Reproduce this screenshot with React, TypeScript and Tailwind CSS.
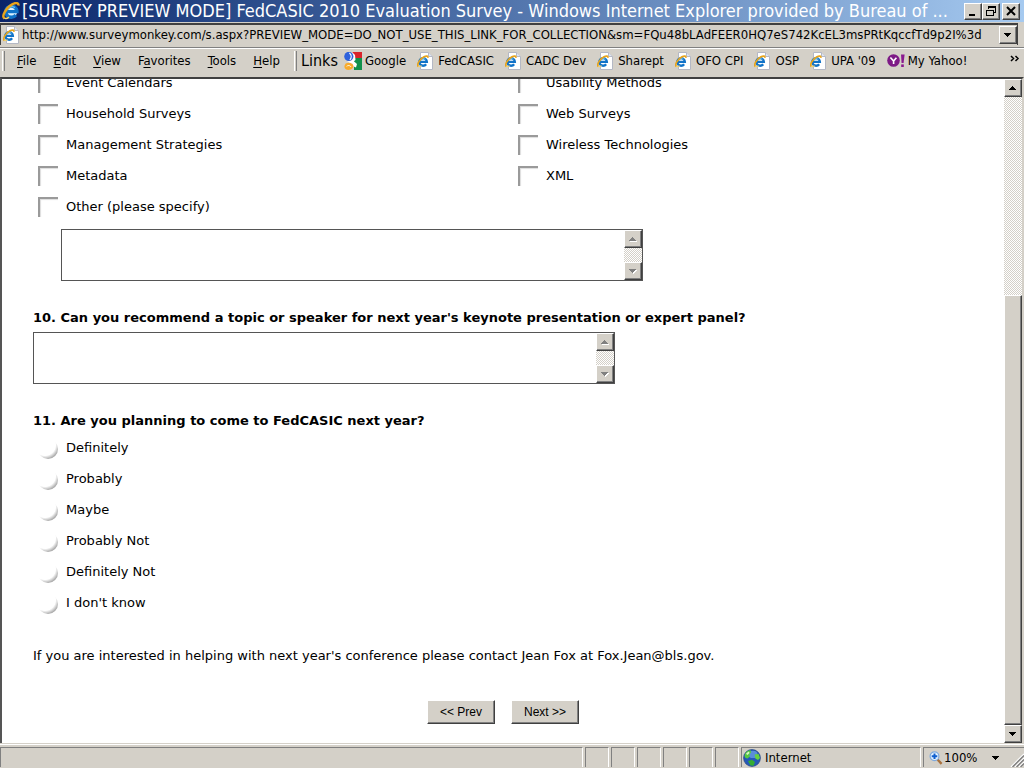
import { useState } from 'react';
import type { ReactNode } from 'react';

const TOPIC_ROWS = [
  ['Event Calendars', 'Usability Methods'],
  ['Household Surveys', 'Web Surveys'],
  ['Management Strategies', 'Wireless Technologies'],
  ['Metadata', 'XML'],
];

const ATTEND_OPTIONS = ['Definitely', 'Probably', 'Maybe', 'Probably Not', 'Definitely Not', "I don't know"];

const MENUS = [
  ['', 'F', 'ile'],
  ['', 'E', 'dit'],
  ['', 'V', 'iew'],
  ['F', 'a', 'vorites'],
  ['', 'T', 'ools'],
  ['', 'H', 'elp'],
];

const LINKS = ['FedCASIC', 'CADC Dev', 'Sharept', 'OFO CPI', 'OSP', "UPA '09"];

const URL_TEXT =
  'http://www.surveymonkey.com/s.aspx?PREVIEW_MODE=DO_NOT_USE_THIS_LINK_FOR_COLLECTION&sm=FQu48bLAdFEER0HQ7eS742KcEL3msPRtKqccfTd9p2I%3d';

const UI_FONT = "font-['DejaVu_Sans_Condensed','DejaVu_Sans',sans-serif] [font-stretch:condensed]";
const RAISED =
  'border border-t-white border-l-white border-r-[#404040] border-b-[#404040] bg-[#d4d0c8] shadow-[inset_-1px_-1px_0_#808080]';
const DITHER = 'bg-[repeating-conic-gradient(#d4d0c8_0_25%,#ffffff_0_50%)] bg-[length:2px_2px]';
const STATUS_CELL = 'h-full border-t border-l border-r border-t-[#808080] border-l-[#808080] border-r-white';

function ExplorerGlyph() {
  return (
    <g fill="none">
      <path d="M4.2 8.6 H13.3 A5 5 0 1 0 12.3 11.6" stroke="#1173c8" strokeWidth="3" />
      <path d="M5 6.5 A4.4 4.4 0 0 1 11.5 5" stroke="#63c0f5" strokeWidth="1.2" />
      <path d="M2.2 14.6 C-0.8 12.6 4 4.6 9.4 1.9 C12.3 0.4 15 0.6 14.5 3.2" stroke="#e9a51b" strokeWidth="2.2" />
      <path d="M2.2 14.2 C3.2 15.2 5 14.4 6.2 13.5" stroke="#f7d46a" strokeWidth="1.4" />
    </g>
  );
}

function ExplorerIcon() {
  return (
    <svg aria-hidden className="size-[18px] shrink-0" viewBox="0 0 16 16">
      <circle cx="8.5" cy="8.5" fill="#d9f1ff" r="5" />
      <ExplorerGlyph />
    </svg>
  );
}

function PageIcon() {
  return (
    <svg aria-hidden className="h-[18px] w-4 shrink-0" viewBox="0 0 16 18">
      <path d="M3.5 0.5 H11.5 L15.5 4.5 V17.5 H3.5 Z" fill="#ffffff" stroke="#b4b8c4" />
      <path d="M11.5 0.5 V4.5 H15.5" fill="#dfe4ee" stroke="#b4b8c4" />
      <g transform="translate(-0.2 3.4) scale(.76)">
        <ExplorerGlyph />
      </g>
    </svg>
  );
}

function GoogleIcon() {
  return (
    <svg aria-hidden className="size-[18px] shrink-0" viewBox="0 0 18 18">
      <path d="M8 0 H18 V6 H9 Z" fill="#d9232b" />
      <path d="M10 6 H18 V18 H10 Z" fill="#11914b" />
      <path d="M8 0 L11 3 L11.5 8 L9 10 L7 8 Z" fill="#fff" />
      <ellipse cx="4.8" cy="4.4" fill="#2f62dc" rx="4.6" ry="4.6" />
      <path d="M5.4 1 C8 3 7.6 6 5.8 8" fill="none" stroke="#fff" strokeWidth="1.1" />
      <path d="M1.6 11.6 C5 9.8 8.5 11 9.6 13.6 C9.8 16 7 18 4.6 18 C2 18 0.2 16.4 0.4 14 Z" fill="#f9ab2d" />
      <path d="M3 9.6 L9 8.6 L13 12 L12 15.6 L9.8 14.6 L8.6 11.8 Z" fill="#fff" />
      <path d="M2.6 14.4 C4 12.8 6.4 13.4 7 15" fill="none" stroke="#fff3cd" />
    </svg>
  );
}

function YahooIcon() {
  return (
    <svg aria-hidden className="h-4 w-[18px] shrink-0" viewBox="0 0 18 16">
      <circle cx="6.5" cy="7.5" fill="#7d1a86" r="6.3" />
      <path d="M3.4 4.5 L6.6 8 L9.4 4.8 M6.6 8 V11" fill="none" stroke="#fff" strokeWidth="1.6" />
      <path d="M14 1.5 H17.6 L16.6 10 H14.6 Z" fill="#8a1a8f" />
      <rect fill="#8a1a8f" height="2.6" width="2.6" x="14.2" y="11.4" />
    </svg>
  );
}

function GlobeIcon() {
  return (
    <svg aria-hidden className="size-[18px] shrink-0" viewBox="0 0 18 18">
      <circle cx="9" cy="9" fill="#2559b8" r="8.4" stroke="#2b4a86" strokeWidth="0.8" />
      <ellipse cx="10" cy="5.4" fill="#7fb2ee" opacity=".6" rx="4.5" ry="3.6" />
      <path d="M1.4 7 C2 3.6 4.4 1.4 7.4 1 L8.2 3.4 L6.4 5.2 L6.8 7.6 L4.6 9.6 L2.6 9 Z" fill="#58c93f" />
      <path d="M11.6 5.4 L15.6 5 L17 9 L15 11 L12.4 9.4 Z" fill="#66d23f" />
      <path d="M5 12 L9 10.8 L12 13 L10.6 16.8 L7.4 16.6 Z" fill="#35ad33" />
      <path d="M3 4.8 L5.6 2.6 L6.6 4 L4.4 6 Z" fill="#d9f7c4" />
    </svg>
  );
}

function MagnifierIcon() {
  return (
    <svg aria-hidden className="size-3.5 shrink-0" viewBox="0 0 14 14">
      <path d="M8.5 8.5 L12.6 12.8" stroke="#a9713d" strokeWidth="2.4" />
      <circle cx="5.5" cy="5.2" fill="#e4f3ff" r="4.4" stroke="#7fa9dc" strokeWidth="1.2" />
      <path d="M5.5 2.4 V8 M2.7 5.2 H8.3" stroke="#0f5fcf" strokeWidth="2" />
    </svg>
  );
}

function Arrow({ up = false, faded = false }: { up?: boolean; faded?: boolean }) {
  const d = up ? 'M0 4 H1 V3 H2 V2 H3 V1 H4 V2 H5 V3 H6 V4 H7 V5 H0 Z' : 'M0 1 H7 V2 H6 V3 H5 V4 H4 V5 H3 V4 H2 V3 H1 V2 H0 Z';
  return (
    <svg aria-hidden className="h-1.5 w-2" shapeRendering="crispEdges" viewBox="0 0 8 6">
      {faded ? <path d={d} fill="#fff" transform="translate(1 1)" /> : null}
      <path d={d} fill={faded ? '#808080' : '#000'} />
    </svg>
  );
}

function ScrollButton({ label, up, faded }: { label: string; up?: boolean; faded?: boolean }) {
  return (
    <button
      aria-label={label}
      className={`flex h-[18px] w-[18px] shrink-0 items-center justify-center ${RAISED}`}
      type="button"
    >
      <Arrow faded={faded} up={up} />
    </button>
  );
}

function CaptionButton({ label, children }: { label: string; children: ReactNode }) {
  return (
    <button aria-label={label} className={`flex h-[17px] w-[18px] items-center justify-center ${RAISED}`} type="button">
      <svg aria-hidden className="h-3 w-3" fill="none" shapeRendering="crispEdges" stroke="#000" viewBox="0 0 12 12">
        {children}
      </svg>
    </button>
  );
}

function TopicCheckbox({ label }: { label: string }) {
  return (
    <label className="flex h-[31px] items-center gap-2">
      <input
        className="size-5 appearance-none border-t-2 border-l-2 border-t-[#9a9a9a] border-l-[#9a9a9a] bg-white shadow-[inset_1px_1px_1px_#dddddd] checked:bg-gray-300"
        type="checkbox"
      />
      {label}
    </label>
  );
}

function AnswerBox({ label, className }: { label: string; className: string }) {
  return (
    <div className={`flex h-[52px] w-[582px] border border-[#555555] bg-white ${className}`}>
      <textarea aria-label={label} className="min-w-0 flex-1 resize-none overflow-hidden p-1 outline-none" />
      <div className={`flex flex-col justify-between ${DITHER}`}>
        <ScrollButton faded label="Scroll answer up" up />
        <ScrollButton faded label="Scroll answer down" />
      </div>
    </div>
  );
}

function TitleBar() {
  return (
    <header className="flex h-[22px] shrink-0 items-center bg-linear-to-r from-[#0a246a] to-[#a6caf0] pr-1 pl-0.5">
      <ExplorerIcon />
      <h1 className={`ml-0.5 min-w-0 flex-1 overflow-hidden whitespace-nowrap text-[18px] leading-[22px] text-white ${UI_FONT}`}>
        [SURVEY PREVIEW MODE] FedCASIC 2010 Evaluation Survey - Windows Internet Explorer provided by Bureau of ...
      </h1>
      <CaptionButton label="Minimize">
        <path d="M2 10 H8" strokeWidth="2" />
      </CaptionButton>
      <CaptionButton label="Restore">
        <path d="M3.5 4 V1.5 H10.5 V7.5 H9 M3 2 H11" />
        <path d="M1.5 5 V10.5 H8.5 V5 M1 5 H9" />
      </CaptionButton>
      <div className="ml-0.5 flex">
        <CaptionButton label="Close">
          <path d="M2 2 L10 10 M10 2 L2 10" shapeRendering="auto" strokeWidth="2" />
        </CaptionButton>
      </div>
    </header>
  );
}

function AddressBar() {
  return (
    <div className="h-[26px] shrink-0 border-b border-[#808080] pt-px pr-1.5 pb-0.5">
      <div className="flex h-full items-center border-t-2 border-r border-l border-[#404040] pl-0.5">
        <PageIcon />
        <input
          aria-label="Address"
          className={`ml-[3px] min-w-0 flex-1 text-[13px] leading-4 outline-none ${UI_FONT}`}
          defaultValue={URL_TEXT}
          type="text"
        />
        <ScrollButton label="Show address history" />
      </div>
    </div>
  );
}

function MenuBar() {
  return (
    <div className={`flex h-[29px] shrink-0 items-center border-t border-white pr-1 pb-1 text-[13px] leading-5 ${UI_FONT}`}>
      <div className="ml-0.5 h-5 w-[3px] border-r border-l border-r-[#808080] border-l-white" />
      <nav aria-label="Menu" className="ml-3 flex gap-[17px]">
        {MENUS.map(([before, key, after]) => (
          <button key={key + after} type="button">
            {before}
            <u className="underline-offset-2">{key}</u>
            {after}
          </button>
        ))}
      </nav>
      <div className="ml-3.5 h-5 w-[3px] border-r border-l border-r-[#808080] border-l-white" />
      <span className="ml-1 text-[16px]">Links</span>
      <nav aria-label="Links" className="ml-1.5 flex min-w-0 flex-1 gap-[11px] overflow-hidden whitespace-nowrap">
        <a className="flex items-center gap-[3px]" href="#google">
          <GoogleIcon />
          Google
        </a>
        {LINKS.map((name) => (
          <a className="flex items-center gap-[5px]" href="#link" key={name}>
            <PageIcon />
            {name}
          </a>
        ))}
        <a className="flex items-center gap-[3px]" href="#yahoo">
          <YahooIcon />
          My Yahoo!
        </a>
      </nav>
      <button aria-label="More links" className="self-start" type="button">
        <svg aria-hidden className="mt-1.5 h-2 w-2.5" fill="none" stroke="#000" viewBox="0 0 10 8">
          <path d="M1 1 L3.5 3.5 L1 6 M5.5 1 L8 3.5 L5.5 6" strokeWidth="1.5" />
        </svg>
      </button>
    </div>
  );
}

function SurveyForm() {
  const [attend, setAttend] = useState('');

  return (
    <form
      className="-mt-3 min-w-0 flex-1 text-[13px] leading-5 font-['DejaVu_Sans',sans-serif]"
      onSubmit={(e) => e.preventDefault()}
    >
      <div className="grid grid-cols-2 pr-1.5 pl-9">
        {TOPIC_ROWS.flat().map((topic) => (
          <TopicCheckbox key={topic} label={topic} />
        ))}
        <TopicCheckbox label="Other (please specify)" />
      </div>
      <AnswerBox className="mt-[7px] ml-[59px]" label="Other topic" />

      <div className="pl-[31px]">
        <h2 className="mt-[27px] font-bold">
          10. Can you recommend a topic or speaker for next year's keynote presentation or expert panel?
        </h2>
        <AnswerBox className="mt-1" label="Topic or speaker recommendation" />
      </div>

      <fieldset className="mt-[27px]">
        <legend className="pl-[31px] font-bold">11. Are you planning to come to FedCASIC next year?</legend>
        <div className="mt-px pl-9">
          {ATTEND_OPTIONS.map((option) => (
            <label className="flex h-[31px] items-center gap-2" key={option}>
              <input
                checked={attend === option}
                className="mt-0.5 size-5 appearance-none rounded-full bg-[radial-gradient(circle_at_35%_30%,#ffffff_55%,#808080_85%)] checked:bg-gray-300"
                name="attend"
                onChange={() => setAttend(option)}
                type="radio"
              />
              {option}
            </label>
          ))}
        </div>
      </fieldset>

      <p className="mt-7 pl-[31px]">
        If you are interested in helping with next year's conference please contact Jean Fox at Fox.Jean@bls.gov.
      </p>
      <div className="mt-[34px] flex justify-center gap-4 font-['Liberation_Sans',sans-serif] text-[12px]">
        <button className={`h-6 px-3 ${RAISED}`} type="button">
          &lt;&lt; Prev
        </button>
        <button className={`h-6 px-3 ${RAISED}`} type="submit">
          Next &gt;&gt;
        </button>
      </div>
    </form>
  );
}

function StatusBar() {
  return (
    <footer className={`flex h-[23px] shrink-0 items-end gap-0.5 pt-0.5 pb-px text-[13px] ${UI_FONT}`}>
      <div className={`flex-1 ${STATUS_CELL}`} />
      {[0, 1, 2, 3, 4, 5].map((i) => (
        <div className={`w-6 ${STATUS_CELL}`} key={i} />
      ))}
      <div className={`flex w-[180px] items-center gap-1 pl-px ${STATUS_CELL}`}>
        <GlobeIcon />
        Internet
      </div>
      <div className="flex h-full w-[101px] items-center border-t border-l border-[#808080] pl-[5px]">
        <button className="flex flex-1 items-center gap-px" type="button">
          <MagnifierIcon />
          <span className="flex-1 text-left">100%</span>
          <Arrow />
        </button>
        <svg aria-hidden className="ml-2.5 size-3.5 self-end" viewBox="0 0 14 14">
          <path d="M1 14 L14 1 M5 14 L14 5 M9 14 L14 9" stroke="#fff" strokeWidth="1.4" />
          <path d="M2.5 14 L14 2.5 M6.5 14 L14 6.5 M10.5 14 L14 10.5" stroke="#808080" strokeWidth="1.4" />
        </svg>
      </div>
    </footer>
  );
}

export default function App() {
  return (
    <div className="flex h-screen flex-col overflow-hidden bg-[#d4d0c8] text-black">
      <TitleBar />
      <AddressBar />
      <MenuBar />
      <div className="flex min-h-0 flex-1 border-t-2 border-r-2 border-l-2 border-t-[#404040] border-r-[#d4d0c8] border-l-[#555555] bg-white">
        <main className="flex min-w-0 flex-1 items-start overflow-hidden">
          <SurveyForm />
        </main>
        <div className={`flex w-[18px] shrink-0 flex-col ${DITHER}`}>
          <ScrollButton label="Scroll up" up />
          <div className="flex-[199]" />
          <div className={`flex-[429] ${RAISED}`} />
          <ScrollButton label="Scroll down" />
        </div>
      </div>
      <div className="h-0.5 shrink-0 border-b border-white" />
      <StatusBar />
    </div>
  );
}
